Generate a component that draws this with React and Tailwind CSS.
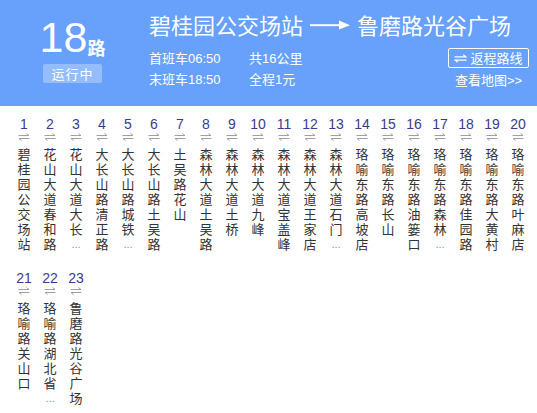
import React from "react";

const stops = [
  "碧桂园公交场站",
  "花山大道春和路",
  "花山大道大长…",
  "大长山路清正路",
  "大长山路城铁…",
  "大长山路土吴路",
  "土吴路花山",
  "森林大道土吴路",
  "森林大道土桥",
  "森林大道九峰",
  "森林大道宝盖峰",
  "森林大道王家店",
  "森林大道石门…",
  "珞喻东路高坡店",
  "珞喻东路长山",
  "珞喻东路油篓口",
  "珞喻东路森林…",
  "珞喻东路佳园路",
  "珞喻东路大黄村",
  "珞喻东路叶麻店",
  "珞喻路关山口",
  "珞喻路湖北省…",
  "鲁磨路光谷广场",
];

const SwapIcon = ({ className }) => (
  <svg viewBox="0 0 12 8" className={className} fill="none" stroke="currentColor" strokeWidth="1">
    <path d="M0.5 2.5H11L8.5 0.5" />
    <path d="M11.5 5.5H1L3.5 7.5" />
  </svg>
);

const Stop = ({ index, name }) => {
  const cut = name.endsWith("…");
  const text = cut ? name.slice(0, -1) : name;
  return (
    <div className="flex flex-col items-center h-[135px]">
      <div className="text-[14px] leading-[16px] text-[#3d3a8e] font-['Liberation_Sans',sans-serif]">
        {index}
      </div>
      <div className="h-[14px] pt-[1px] text-[#a0a0a0]">
        <SwapIcon className="w-[12px] h-[8px]" />
      </div>
      <div className="w-[13px] text-[13px] leading-[15px] text-[#333333] break-all text-center">
        {text}
        {cut && (
          <span className="flex justify-center w-[13px] h-[15px] items-end pb-[1px] text-[11px] leading-[11px] text-[#5d9fe6] whitespace-nowrap font-['Liberation_Sans',sans-serif]">
            ...
          </span>
        )}
      </div>
    </div>
  );
};

export default function App() {
  return (
    <div className="w-[537px] h-[413px] bg-white font-['Noto_Sans_CJK_SC',sans-serif] overflow-hidden">
      {/* header */}
      <div className="h-[106px] bg-[#67a1fb] flex text-white">
        <div className="w-[145px] flex flex-col items-center pt-[14px]">
          <div className="flex items-end">
            <span className="text-[43px] leading-[46px] font-['Liberation_Sans',sans-serif]">18</span>
            <span className="text-[18px] leading-[24px] font-bold mb-[1px]">路</span>
          </div>
          <div className="mt-[4px] w-[59px] h-[19px] rounded-[2px] bg-[#95bdfc] text-[13px] leading-[19px] text-center tracking-[1px]">
            运行中
          </div>
        </div>
        <div className="flex-1 pl-[4px] pt-[11px] pr-[8px]">
          <div className="flex items-center text-[22px] leading-[27px]">
            <span>碧桂园公交场站</span>
            <svg viewBox="0 0 40 12" className="w-[40px] h-[12px] mx-[7px]" fill="white">
              <rect x="0" y="5.2" width="32" height="2" />
              <path d="M29 1.5L40 6.2L29 10.5Z" />
            </svg>
            <span>鲁磨路光谷广场</span>
          </div>
          <div className="flex mt-[10px]">
            <div className="text-[13px] leading-[20px] w-[100px]">
              <div>首班车<span className="font-['Liberation_Sans',sans-serif]">06:50</span></div>
              <div>末班车<span className="font-['Liberation_Sans',sans-serif]">18:50</span></div>
            </div>
            <div className="text-[13px] leading-[20px]">
              <div>共<span className="font-['Liberation_Sans',sans-serif]">16</span>公里</div>
              <div>全程<span className="font-['Liberation_Sans',sans-serif]">1</span>元</div>
            </div>
            <div className="ml-auto flex flex-col items-center">
              <div className="w-[81px] h-[20px] border border-white rounded-[2px] flex items-center justify-center gap-[3px] text-[13px] leading-[18px]">
                <SwapIcon className="w-[13px] h-[9px]" />
                <span>返程路线</span>
              </div>
              <div className="mt-[4px] text-[13px] leading-[16px]">
                查看地图<span className="font-['Liberation_Sans',sans-serif]">&gt;&gt;</span>
              </div>
            </div>
          </div>
        </div>
      </div>

      {/* stops */}
      <div className="grid grid-cols-[repeat(20,26px)] gap-y-[19px] pl-[11px] pt-[10px]">
        {stops.map((s, i) => (
          <Stop key={i} index={i + 1} name={s} />
        ))}
      </div>
    </div>
  );
}
